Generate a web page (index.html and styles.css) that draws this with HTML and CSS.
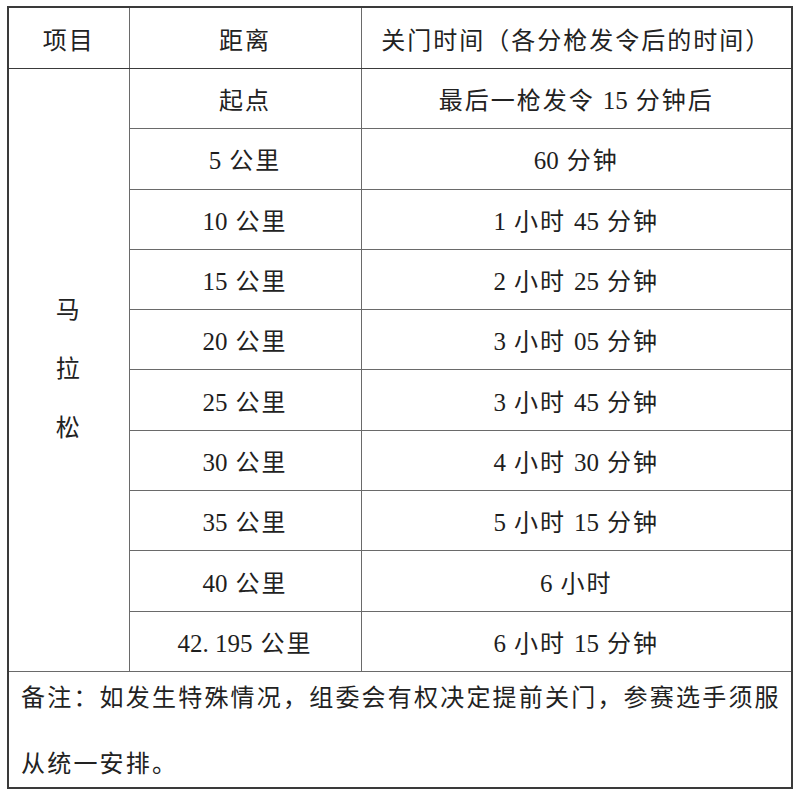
FILE: index.html
```html
<!DOCTYPE html>
<html lang="zh-CN">
<head>
<meta charset="utf-8">
<link rel="stylesheet" href="styles.css">
</head>
<body>
<table class="grid">
  <colgroup>
    <col class="c1"><col class="c2"><col class="c3">
  </colgroup>
  <tr class="head">
    <td>项目</td>
    <td>距离</td>
    <td>关门时间（各分枪发令后的时间）</td>
  </tr>
  <tr class="row">
    <td rowspan="10" class="event"><div class="vert">马<br>拉<br>松</div></td>
    <td>起点</td>
    <td>最后一枪发令 <span class="num">15</span> 分钟后</td>
  </tr>
  <tr class="row"><td><span class="num">5</span> 公里</td><td><span class="num">60</span> 分钟</td></tr>
  <tr class="row"><td><span class="num">10</span> 公里</td><td><span class="num">1</span> 小时 <span class="num">45</span> 分钟</td></tr>
  <tr class="row"><td><span class="num">15</span> 公里</td><td><span class="num">2</span> 小时 <span class="num">25</span> 分钟</td></tr>
  <tr class="row"><td><span class="num">20</span> 公里</td><td><span class="num">3</span> 小时 <span class="num">05</span> 分钟</td></tr>
  <tr class="row"><td><span class="num">25</span> 公里</td><td><span class="num">3</span> 小时 <span class="num">45</span> 分钟</td></tr>
  <tr class="row"><td><span class="num">30</span> 公里</td><td><span class="num">4</span> 小时 <span class="num">30</span> 分钟</td></tr>
  <tr class="row"><td><span class="num">35</span> 公里</td><td><span class="num">5</span> 小时 <span class="num">15</span> 分钟</td></tr>
  <tr class="row"><td><span class="num">40</span> 公里</td><td><span class="num">6</span> 小时</td></tr>
  <tr class="row"><td><span class="num">42. 195</span> 公里</td><td><span class="num">6</span> 小时 <span class="num">15</span> 分钟</td></tr>
  <tr class="note">
    <td colspan="3"><div class="note-text">备注：如发生特殊情况，组委会有权决定提前关门，参赛选手须服从统一安排。</div></td>
  </tr>
</table>
</body>
</html>
```

FILE: styles.css
```css
html, body {
  margin: 0;
  padding: 0;
  background: #ffffff;
}
body {
  font-family: "Liberation Serif", "Noto Sans CJK SC", serif;
  color: #222222;
  font-size: 24px;
}
.grid {
  margin: 6px 0 0 7px;
  border-collapse: collapse;
  table-layout: fixed;
  width: 784px;
  border: 2px solid #3a3a3a;
}
.c1 { width: 121px; }
.c2 { width: 232px; }
.c3 { width: 431px; }
.grid td {
  border: 1.5px solid #6a6a6a;
  text-align: center;
  vertical-align: middle;
  padding: 0;
  letter-spacing: 2px;
  font-weight: 400;
}
.num {
  letter-spacing: 0;
  font-size: 25px;
  color: #1e1e1e;
}
.head td {
  height: 60px;
  border-bottom: 1.5px solid #3a3a3a;
}
.row td {
  height: 59.3px;
}
.event .vert {
  line-height: 59px;
}
.note td {
  height: 115px;
  text-align: left;
  vertical-align: top;
  border-top: 1.5px solid #3a3a3a;
}
.note-text {
  height: 108px;
  margin: -7px 0 0 12px;
  line-height: 66px;
  letter-spacing: 2.2px;
}
```
